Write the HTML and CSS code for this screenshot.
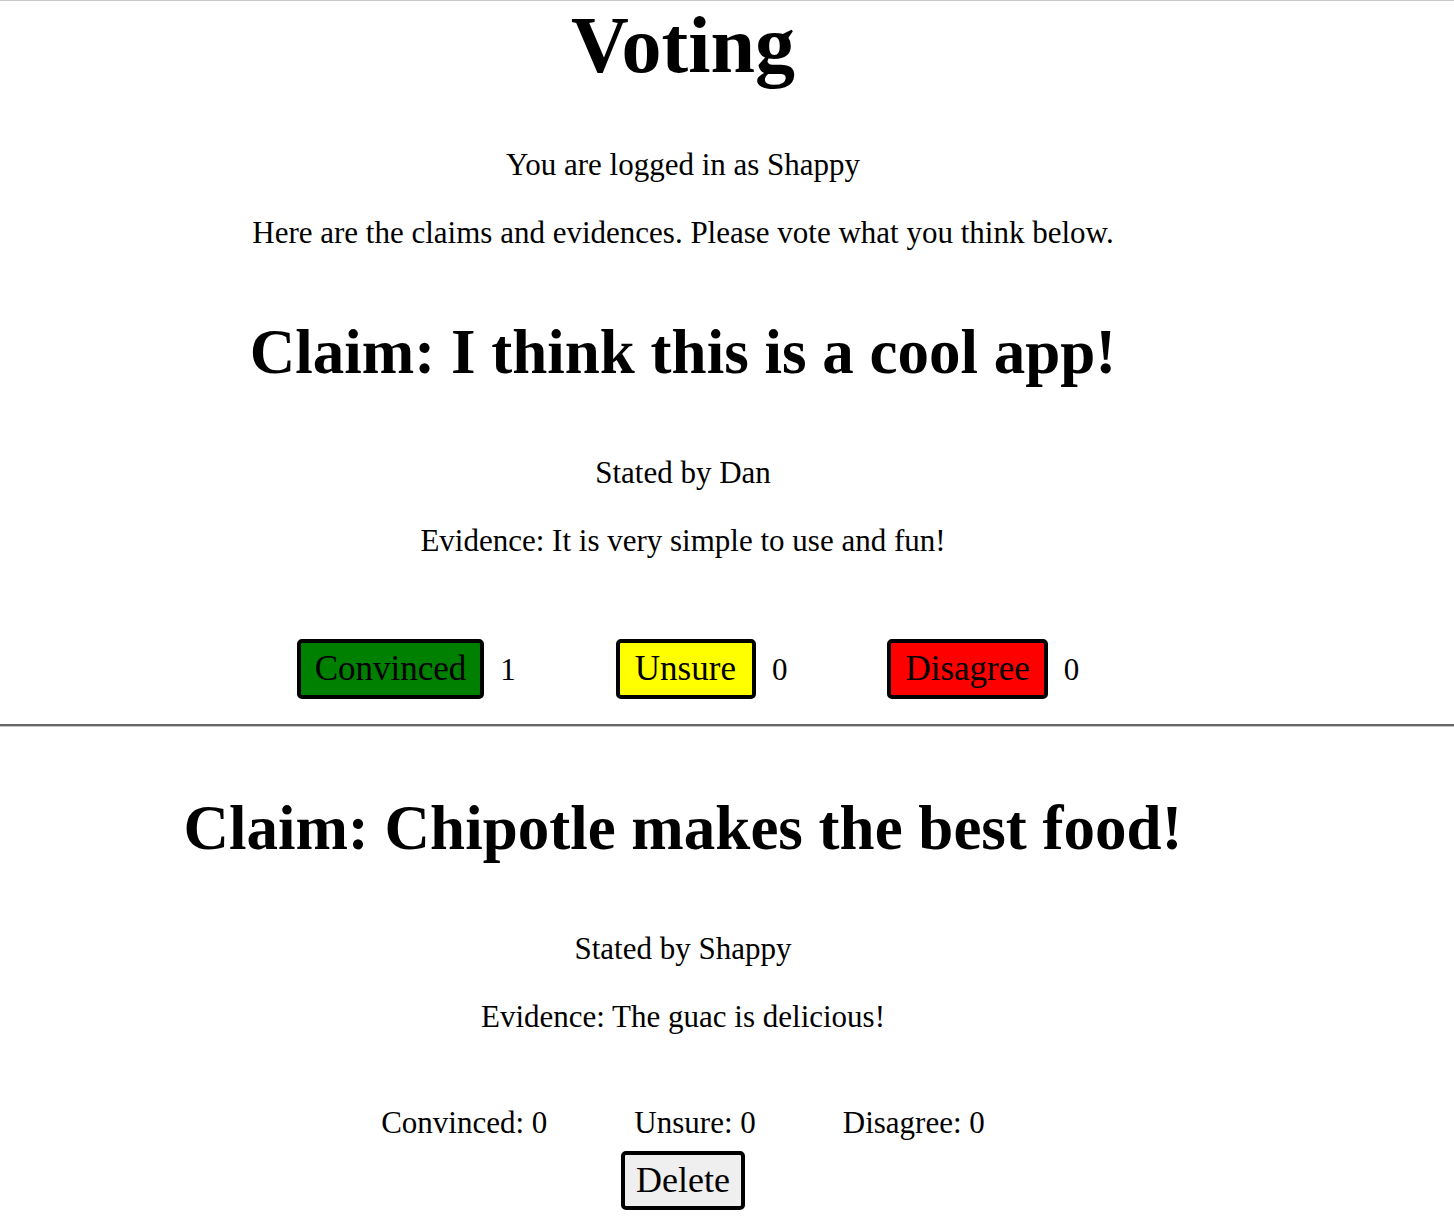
FILE: index.html
```html
<!DOCTYPE html>
<html lang="en">
<head>
<meta charset="utf-8">
<title>Voting</title>
<link rel="stylesheet" href="styles.css">
</head>
<body>
<header class="wrap">
  <h1 class="title">Voting</h1>
  <p class="line">You are logged in as Shappy</p>
  <p class="line">Here are the claims and evidences. Please vote what you think below.</p>
</header>

<section class="wrap claim claim-first">
  <h2 class="claim-title">Claim: I think this is a cool app!</h2>
  <p class="line">Stated by Dan</p>
  <p class="line">Evidence: It is very simple to use and fun!</p>
  <div class="vote-row">
    <div class="vote-group">
      <button class="vote-btn vote-green">Convinced</button>
      <span class="vote-count">1</span>
    </div>
    <div class="vote-group">
      <button class="vote-btn vote-yellow">Unsure</button>
      <span class="vote-count">0</span>
    </div>
    <div class="vote-group">
      <button class="vote-btn vote-red">Disagree</button>
      <span class="vote-count">0</span>
    </div>
  </div>
</section>

<hr class="divider">

<section class="wrap claim claim-second">
  <h2 class="claim-title">Claim: Chipotle makes the best food!</h2>
  <p class="line">Stated by Shappy</p>
  <p class="line">Evidence: The guac is delicious!</p>
  <div class="tally-row">
    <span class="tally">Convinced: 0</span>
    <span class="tally">Unsure: 0</span>
    <span class="tally">Disagree: 0</span>
  </div>
  <div class="delete-row">
    <button class="delete-btn">Delete</button>
  </div>
</section>
</body>
</html>
```
FILE: styles.css
```css
html, body {
  margin: 0;
  padding: 0;
  background: #ffffff;
}

body {
  border-top: 1px solid #c8c8c8;
  font-family: "Liberation Serif", "Times New Roman", serif;
  font-size: 31px;
  color: #000000;
}

.wrap {
  width: 1366px;
  text-align: center;
}

.title {
  margin: 0 0 57px;
  font-size: 80px;
  line-height: 88px;
  font-weight: bold;
}

.line {
  margin: 31px 0;
  line-height: 37px;
}

header .line:first-of-type {
  margin-top: 0;
}

.claim-title {
  font-size: 63px;
  font-weight: bold;
  margin: 0 0 65px;
}

.claim-first {
  padding-top: 34px;
}

.claim-first .claim-title {
  margin-top: 0;
}

.claim-second .claim-title {
  margin-top: 65px;
}

.claim .line:last-of-type {
  margin-bottom: 0;
}

.vote-row {
  display: flex;
  justify-content: center;
  align-items: baseline;
  gap: 100px;
  margin: 80px 0 25px;
  padding-left: 10px;
}

.vote-group {
  display: flex;
  align-items: baseline;
  gap: 16px;
}

.vote-btn {
  font-family: "Liberation Serif", "Times New Roman", serif;
  font-size: 35px;
  color: #000000;
  padding: 6px 14px;
  border: 4px solid #000000;
  border-radius: 5px;
  cursor: pointer;
}

.vote-yellow {
  background: #ffff00;
  padding-left: 15px;
  padding-right: 16px;
}

.vote-green { background: #008000; }
.vote-red { background: #ff0000; }

.divider {
  margin: 0;
  height: 0;
  border: 0;
  border-top: 2px solid #666666;
  border-bottom: 1px solid #c4c4c4;
}

.tally-row {
  display: flex;
  justify-content: center;
  gap: 87px;
  margin-top: 70px;
}

.delete-row {
  display: flex;
  justify-content: center;
  margin-top: 10px;
}

.delete-btn {
  font-family: "Liberation Serif", "Times New Roman", serif;
  font-size: 36px;
  color: #000000;
  background: #efefef;
  padding: 4px 11px 5px;
  border: 4px solid #000000;
  border-radius: 5px;
  cursor: pointer;
}
```
